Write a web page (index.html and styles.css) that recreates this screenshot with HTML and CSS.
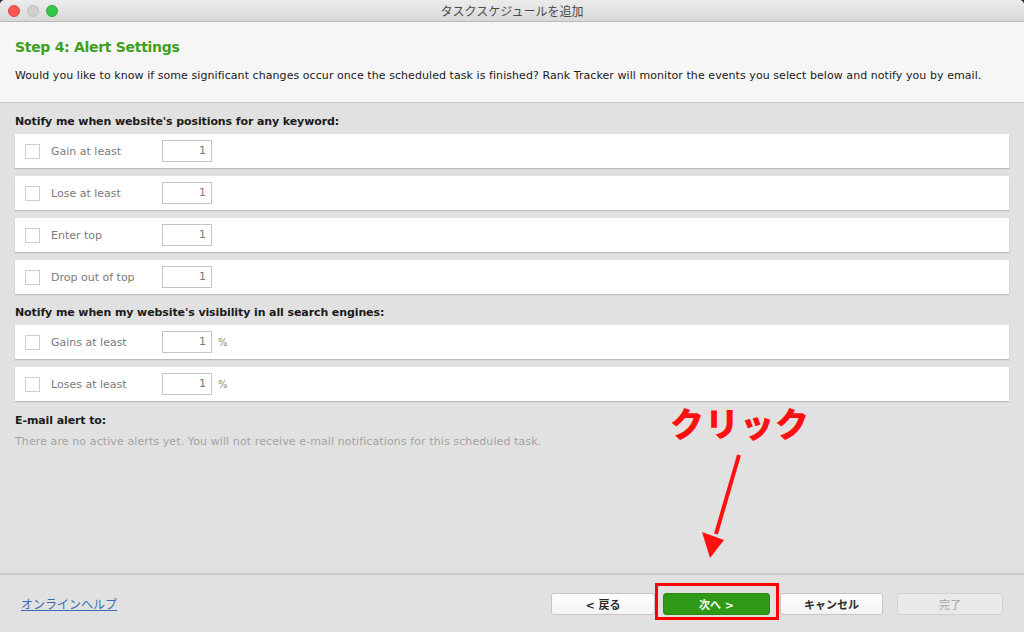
FILE: index.html
```html
<!DOCTYPE html>
<html lang="ja">
<head>
    <meta charset="UTF-8">
    <meta name="viewport" content="width=device-width, initial-scale=1.0">
    <title>タスクスケジュールを追加</title>
    <link rel="stylesheet" href="styles.css">
</head>
<body>

<div class="window">
    <!-- Window title bar -->
    <div class="titlebar">
        <div class="lights">
            <span class="light light-red"></span>
            <span class="light light-gray"></span>
            <span class="light light-green"></span>
        </div>
        <div class="title">タスクスケジュールを追加</div>
    </div>

    <!-- Step header -->
    <div class="header">
        <h1>Step 4: Alert Settings</h1>
        <p class="desc">Would you like to know if some significant changes occur once the scheduled task is finished? Rank Tracker will monitor the events you select below and notify you by email.</p>
    </div>

    <!-- Alert options -->
    <div class="content">
        <div class="section-title">Notify me when website's positions for any keyword:</div>
        <div class="rows">
            <div class="row">
                <span class="check"></span>
                <span class="label">Gain at least</span>
                <span class="field">1</span>
            </div>
            <div class="row">
                <span class="check"></span>
                <span class="label">Lose at least</span>
                <span class="field">1</span>
            </div>
            <div class="row">
                <span class="check"></span>
                <span class="label">Enter top</span>
                <span class="field">1</span>
            </div>
            <div class="row">
                <span class="check"></span>
                <span class="label">Drop out of top</span>
                <span class="field">1</span>
            </div>
        </div>

        <div class="section-title second">Notify me when my website's visibility in all search engines:</div>
        <div class="rows">
            <div class="row">
                <span class="check"></span>
                <span class="label">Gains at least</span>
                <span class="field">1</span>
                <span class="unit">%</span>
            </div>
            <div class="row">
                <span class="check"></span>
                <span class="label">Loses at least</span>
                <span class="field">1</span>
                <span class="unit">%</span>
            </div>
        </div>

        <div class="section-title last">E-mail alert to:</div>
        <p class="note">There are no active alerts yet. You will not receive e-mail notifications for this scheduled task.</p>
    </div>

    <!-- Footer buttons -->
    <div class="footer">
        <a class="help-link" href="#">オンラインヘルプ</a>
        <div class="buttons">
            <button class="btn btn-back">&lt; 戻る</button>
            <button class="btn btn-next">次へ &gt;</button>
            <button class="btn btn-cancel">キャンセル</button>
            <button class="btn btn-finish" disabled>完了</button>
        </div>
    </div>
</div>

<!-- Screenshot annotation -->
<div class="note-text">クリック</div>
<svg class="note-arrow" width="60" height="120" viewBox="0 0 60 120">
    <line x1="45" y1="3" x2="22" y2="82" stroke="#ff1010" stroke-width="4"/>
    <polygon points="8,80 30,88 16,106" fill="#ff1010"/>
</svg>
<div class="note-box"></div>

</body>
</html>
```

FILE: styles.css
```css
/* Base */
html, body {
    margin: 0;
    padding: 0;
    background-color: #2a2a2a;
}

body {
    width: 1024px;
    height: 632px;
    position: relative;
    overflow: hidden;
    font-family: "DejaVu Sans", "Noto Sans CJK JP", sans-serif;
}

.window {
    width: 1024px;
    height: 632px;
    display: flex;
    flex-direction: column;
    background-color: #e1e1e1;
    border-radius: 5px 5px 0 0;
    overflow: hidden;
}

/* Title bar */
.titlebar {
    height: 22px;
    flex-shrink: 0;
    display: flex;
    align-items: center;
    position: relative;
    background: linear-gradient(#ececec, #d8d8d8);
    border-bottom: 1px solid #b9b9b9;
    box-sizing: border-box;
}

.lights {
    display: flex;
    gap: 7px;
    padding-left: 8px;
}

.light {
    width: 12px;
    height: 12px;
    border-radius: 50%;
    box-sizing: border-box;
}

.light-red {
    background-color: #fc5753;
    border: 1px solid #df4744;
}

.light-gray {
    background-color: #d0d0d0;
    border: 1px solid #bdbdbd;
}

.light-green {
    background-color: #33c748;
    border: 1px solid #27aa35;
}

.title {
    position: absolute;
    left: 0;
    right: 0;
    text-align: center;
    font-family: "Noto Sans CJK JP", sans-serif;
    font-size: 12px;
    color: #4a4a4a;
}

/* Header */
.header {
    height: 81px;
    flex-shrink: 0;
    box-sizing: border-box;
    padding: 15px 15px 0;
    background-color: #f6f6f6;
    border-bottom: 1px solid #c9c9c9;
}

.header h1 {
    margin: 0;
    font-size: 14px;
    line-height: 20px;
    font-weight: bold;
    letter-spacing: -0.3px;
    color: #3f9f1f;
}

.desc {
    margin: 11px 0 0;
    font-size: 11px;
    line-height: 16px;
    letter-spacing: 0.065px;
    color: #1a1a1a;
    white-space: nowrap;
}

/* Content */
.content {
    flex: 1;
    padding: 11px 15px 0;
}

.section-title {
    font-size: 11px;
    line-height: 16px;
    font-weight: bold;
    letter-spacing: -0.1px;
    color: #1a1a1a;
}

.section-title.second {
    margin-top: 11px;
}

.section-title.last {
    margin-top: 12px;
}

.rows {
    display: flex;
    flex-direction: column;
    gap: 8px;
    margin-top: 4px;
}

.row {
    height: 34px;
    display: flex;
    align-items: center;
    padding-left: 10px;
    background-color: #fff;
    box-shadow: 0 1px 1px rgba(0, 0, 0, 0.16);
}

.check {
    width: 15px;
    height: 15px;
    box-sizing: border-box;
    border: 1px solid #cdcdcd;
    background-color: #fff;
}

.label {
    width: 111px;
    margin-left: 11px;
    font-size: 11px;
    color: #7a7a7a;
}

.field {
    width: 50px;
    height: 22px;
    box-sizing: border-box;
    border: 1px solid #c4c4c4;
    padding-right: 5px;
    text-align: right;
    font-size: 11px;
    line-height: 20px;
    color: #7a7a7a;
}

.unit {
    margin-left: 6px;
    font-size: 10px;
    color: #8a8a8a;
}

.note {
    margin: 5px 0 0;
    font-size: 11px;
    line-height: 16px;
    letter-spacing: 0.1px;
    color: #a3a3a3;
}

/* Footer */
.footer {
    height: 59px;
    flex-shrink: 0;
    box-sizing: border-box;
    display: flex;
    align-items: center;
    justify-content: space-between;
    padding: 0 21px 0 21px;
    border-top: 2px solid #cbcbcb;
    background-color: #e1e1e1;
}

.help-link {
    font-family: "Noto Sans CJK JP", sans-serif;
    font-size: 12px;
    color: #3b6bb3;
    text-decoration: underline;
}

.buttons {
    display: flex;
    align-items: center;
}

.btn {
    height: 22px;
    box-sizing: border-box;
    border: 1px solid #c6c6c6;
    border-radius: 3px;
    background: linear-gradient(#ffffff, #f3f3f3);
    font-family: "DejaVu Sans", "Noto Sans CJK JP", sans-serif;
    font-size: 11px;
    font-weight: bold;
    color: #2a2a2a;
    padding: 0;
}

.btn-back {
    width: 104px;
}

.btn-next {
    width: 107px;
    margin-left: 8px;
    background: #2f9a16;
    border-color: #2a8713;
    color: #fff;
}

.btn-cancel {
    width: 103px;
    margin-left: 10px;
}

.btn-finish {
    width: 106px;
    margin-left: 14px;
    background: #e9e9e9;
    border-color: #d2d2d2;
    color: #a5a5a5;
    font-weight: normal;
}

/* Annotation overlay */
.note-text {
    position: absolute;
    left: 670px;
    top: 398px;
    font-family: "Noto Sans CJK JP", sans-serif;
    font-size: 34px;
    font-weight: 900;
    color: #ff1010;
    letter-spacing: 1px;
}

.note-arrow {
    position: absolute;
    left: 694px;
    top: 452px;
}

.note-box {
    position: absolute;
    left: 655px;
    top: 583px;
    width: 124px;
    height: 37px;
    box-sizing: border-box;
    border: 3px solid #ff0000;
}
```
